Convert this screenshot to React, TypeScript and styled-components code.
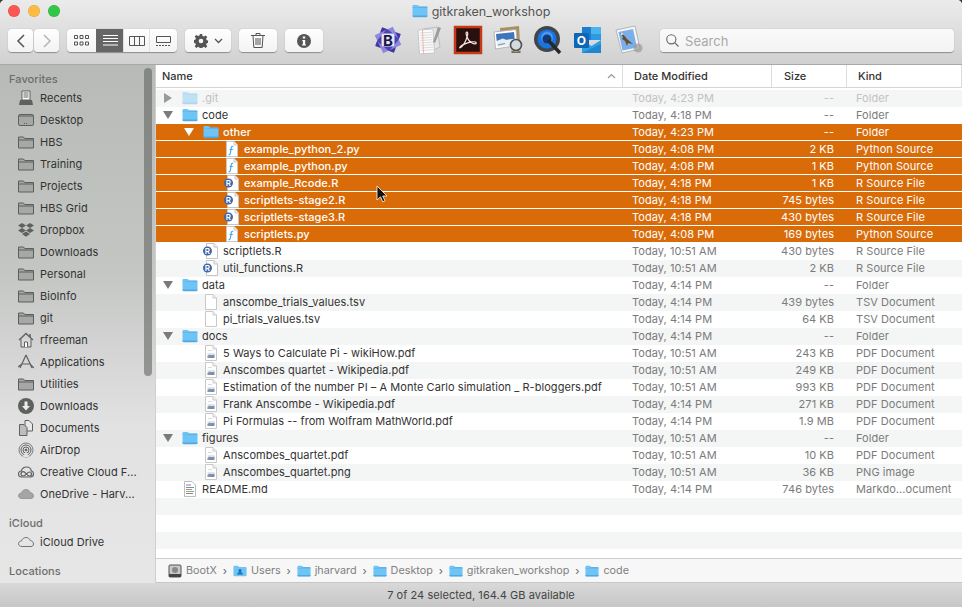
import React from "react";
import styled, { createGlobalStyle } from "styled-components";

const Global = createGlobalStyle`
  html, body { margin: 0; padding: 0; background: #3a3a3a; }
  #root { width: 962px; height: 607px; overflow: hidden; }
  * { box-sizing: border-box; }
`;

const Window = styled.div`
  width: 962px; height: 607px; display: flex; flex-direction: column;
  border-radius: 5px 5px 0 0; overflow: hidden; background: #fff;
  font-family: Inter, "Liberation Sans", sans-serif; font-size: 11px; letter-spacing: .05px; position: relative;
`;
const Chrome = styled.header`
  height: 65px; flex: none; display: flex; flex-direction: column;
  background: linear-gradient(#ebebeb, #d1d1d1); border-bottom: 1px solid #a8a8a8;
`;
const TitleBar = styled.div`
  height: 22px; flex: none; position: relative; display: flex; align-items: center; justify-content: center; gap: 4px;
  color: #555; font-size: 12.5px; letter-spacing: 0;
`;
const Lights = styled.div`
  position: absolute; left: 8px; top: 5px; display: flex; gap: 8px;
`;
const Light = styled.span<{ $c: string }>`
  width: 12px; height: 12px; border-radius: 50%; background: ${p => p.$c}; box-shadow: inset 0 0 0 .5px rgba(0,0,0,.12);
`;
const ToolRow = styled.div`
  display: flex; align-items: flex-start; padding: 7px 8px 0;
`;
const Btn = styled.div<{ $w: number; $ml?: number }>`
  width: ${p => p.$w}px; height: 23px; margin-left: ${p => p.$ml ?? 0}px; flex: none;
  display: flex; align-items: center; justify-content: center; gap: 6px;
  background: linear-gradient(#fefefe, #f3f3f3); border-radius: 4px; box-shadow: 0 .5px 1px rgba(0,0,0,.35);
`;
const Segmented = styled.div`
  margin-left: 8px; display: flex; height: 23px; flex: none; border-radius: 4px; overflow: hidden;
  background: linear-gradient(#fefefe, #f3f3f3); box-shadow: 0 .5px 1px rgba(0,0,0,.35);
`;
const Seg = styled.div<{ $w: number; $on?: boolean }>`
  width: ${p => p.$w}px; display: flex; align-items: center; justify-content: center;
  background: ${p => (p.$on ? "#666" : "transparent")}; color: ${p => (p.$on ? "#fff" : "#555")};
  border-left: 1px solid ${p => (p.$on ? "#666" : "#e2e2e2")};
  &:first-child { border-left: none; }
`;
const Apps = styled.div`
  margin-left: 50px; margin-top: -4px; display: flex; gap: 10px; flex: none;
`;
const Search = styled.div`
  margin-left: 17px; width: 294px; height: 23px; flex: none; display: flex; align-items: center; gap: 6px; padding-left: 6px;
  background: linear-gradient(#fafafa, #f3f3f3); border-radius: 4px; box-shadow: 0 .5px 1px rgba(0,0,0,.35);
  color: #a9a9a9; font-size: 13px;
`;
const Body = styled.div` flex: 1; min-height: 0; display: flex; `;
const Sidebar = styled.nav`
  width: 156px; flex: none; position: relative; overflow: hidden; padding-top: 6px;
  background: linear-gradient(#b7bab7 0%, #c4c6c4 40%, #e2e2e2 70%, #e6e6e6 100%);
  border-right: 1px solid #cfcfcf;
`;
const Thumb = styled.div`
  position: absolute; left: 144px; top: 3px; width: 8px; height: 308px; border-radius: 4px; background: rgba(90,92,90,.55);
`;
const GroupLabel = styled.div`
  height: 16px; line-height: 16px; padding-left: 9px; color: #6b6d6b; font-weight: 500;
  &:not(:first-of-type) { margin-top: 10px; }
`;
const SideItem = styled.div`
  height: 22px; display: flex; align-items: center; padding-left: 18px; gap: 6px; color: #333; white-space: nowrap;
`;
const Main = styled.main` flex: 1; min-width: 0; display: flex; flex-direction: column; background: #fff; `;
const HeaderRow = styled.div`
  height: 23px; flex: none; display: flex; color: #333; border-bottom: 1px solid #d5d5d5; margin-bottom: 2px; background: #fff;
`;
const HCell = styled.div<{ $w: number; $pl: number }>`
  width: ${p => p.$w}px; flex: none; height: 100%; display: flex; align-items: center; justify-content: space-between;
  padding-left: ${p => p.$pl}px; padding-right: 6px; border-right: 1px solid #dcdcdc; font-weight: 500; letter-spacing: 0;
`;
const Rows = styled.div` flex: 1; min-height: 0; overflow: hidden; `;
const Row = styled.div<{ $sel?: boolean; $odd?: boolean; $dim?: boolean }>`
  height: 17px; display: flex; align-items: center; white-space: nowrap;
  background: ${p => (p.$sel ? "#d96b09" : p.$odd ? "#f4f5f5" : "#fff")};
  border-bottom: ${p => (p.$sel ? "1px solid #fff" : "none")};
  padding-bottom: ${p => (p.$sel ? 0 : 1)}px;
  color: ${p => (p.$sel ? "#fff" : p.$dim ? "#c2c2c2" : "#7b7b7b")};
`;
const NameCell = styled.div<{ $depth: number; $sel?: boolean; $dim?: boolean }>`
  width: 466px; flex: none; display: flex; align-items: center; padding-left: ${p => 6 + p.$depth * 21}px;
  color: ${p => (p.$sel ? "#fff" : p.$dim ? "#c2c2c2" : "#333")}; font-weight: ${p => (p.$sel ? 500 : 400)};
`;
const Arrow = styled.span<{ $open: boolean; $sel?: boolean; $dim?: boolean; $none?: boolean }>`
  width: 20px; flex: none; display: flex; padding-left: 1px; visibility: ${p => (p.$none ? "hidden" : "visible")};
  &::before {
    content: ""; width: 0; height: 0; display: block;
    ${p => {
      const c = p.$sel ? "#fff" : p.$dim ? "#999" : "#7a7a7a";
      return p.$open
        ? `border-left: 5px solid transparent; border-right: 5px solid transparent; border-top: 8px solid ${c};`
        : `border-top: 5px solid transparent; border-bottom: 5px solid transparent; border-left: 8px solid ${c}; margin-left: 1px;`;
    }}
  }
`;
const IconSlot = styled.span<{ $dim?: boolean }>`
  width: 16px; height: 16px; flex: none; margin-right: 4px; display: flex; align-items: center; justify-content: center;
  opacity: ${p => (p.$dim ? 0.4 : 1)};
`;
const DateCell = styled.div` width: 149px; flex: none; padding-left: 10px; `;
const SizeCell = styled.div` width: 75px; flex: none; text-align: right; padding-right: 12px; `;
const KindCell = styled.div` flex: 1; padding-left: 10px; `;
const PathBar = styled.div`
  height: 25px; flex: none; display: flex; align-items: center; padding-left: 12px; color: #7f7f7f; background: #f7f7f7;
  border-top: 1px solid #cfcfcf; border-bottom: 1px solid #c6c6c6; font-size: 10.8px; letter-spacing: 0;
`;
const Crumb = styled.div` display: flex; align-items: center; gap: 4px; `;
const Sep = styled.span` width: 16px; text-align: center; color: #666; font-size: 11px; `;
const StatusBar = styled.footer`
  height: 24px; flex: none; display: flex; align-items: center; justify-content: center; color: #444;
  background: linear-gradient(#d9d9d9, #c6c6c6);
`;
const Cursor = styled.svg` position: absolute; left: 376px; top: 185px; `;

const Folder = ({ s = 16, tone = "blue" }: { s?: number; tone?: "blue" | "gray" }) =>
  tone === "blue" ? (
    <svg width={s} height={s} viewBox="0 0 16 16">
      <path d="M.5 3.2C.5 2.5 1 2 1.7 2h3.6c.5 0 .8.2 1.1.6l.7.9h7.2c.7 0 1.2.5 1.2 1.2v8.1c0 .7-.5 1.2-1.2 1.2H1.7c-.7 0-1.2-.5-1.2-1.2z" fill="#6fc4f6" />
      <path d="M.5 5h15v-.3c0-.7-.5-1.2-1.2-1.2H7L5.900 4.600 .5 4.600z" fill="#4ea9e3" opacity=".6" />
      <path d="M.5 12.6v.4c0 .7.5 1.2 1.2 1.2h12.6c.7 0 1.2-.5 1.2-1.2v-.4z" fill="#4fa8e0" />
    </svg>
  ) : (
    <svg width={16} height={16} viewBox="0 0 16 16">
      <path d="M.5 3h5l1.2 1.5h8.8v9.5H.5z" fill="#a6a8a6" stroke="#5c5e5c" />
      <path d="M.5 6h15" stroke="#5c5e5c" />
    </svg>
  );

const PageBase = ({ children }: { children?: React.ReactNode }) => (
  <svg width={16} height={16} viewBox="0 0 16 16">
    <path d="M2.500.5h7.500l3.500 3.500v11.500h-11z" fill="#fff" stroke="#c9c9c9" />
    <path d="M10 .5v3.500h3.500" fill="#f2f2f2" stroke="#c9c9c9" />
    {children}
  </svg>
);
const PyDoc = () => (
  <PageBase>
    <path d="M9.300 5.500c-1.200-.5-1.800 0-2 1.200l-1 5.800c-.2 1-.8 1.300-1.600 1M5.600 8.500h3.200" fill="none" stroke="#39a6e8" strokeWidth="1.100" />
  </PageBase>
);
const RDoc = () => (
  <svg width={16} height={16} viewBox="0 0 16 16">
    <path d="M3.500.5H11L14.500 4v11.500h-11z" fill="#fff" stroke="#c4c4c4" />
    <path d="M11 .5V4h3.500" fill="#f2f2f2" stroke="#c4c4c4" />
    <circle cx="4.500" cy="8" r="4.500" fill="#3f66a6" />
    <text x="4.500" y="11" textAnchor="middle" fontSize="8" fontWeight="600" fill="#fff" fontFamily="Inter">R</text>
  </svg>
);
const PdfDoc = () => (
  <PageBase>
    <rect x="4.500" y="8" width="7" height="5" fill="#dfe6f0" />
    <path d="M4.500 11l2-1.500 2 1 3-1V13h-7z" fill="#7f95b8" />
    <circle cx="9" cy="11.500" r="1.500" fill="#8a8a8a" />
    <path d="M5 5.500h4" stroke="#dcdcdc" />
  </PageBase>
);
const ReadmeDoc = () => (
  <svg width={14} height={16} viewBox="0 0 14 16">
    <path d="M1.500.5H9L12.500 4v11.500h-11z" fill="#fff" stroke="#bdbdbd" />
    <path d="M3 4h5" stroke="#888" />
    <path d="M3 6.500h8" stroke="#6b8fc9" />
    <path d="M3 8.500h6" stroke="#cf7a7a" />
    <path d="M3 10.500h8" stroke="#88b07a" />
    <path d="M3 12.500h7" stroke="#888" />
  </svg>
);

const g = "#5f615f";
const cloud = "M4 12.500C2 12.500.5 11.500.5 9.800S2 7 3.500 7C4.300 4.500 6 3.500 8 3.500s3.500 1 4.200 3C14.500 6.800 15.500 8.300 15.500 10s-1.200 2.500-2.500 2.500z";
const SideIcons: Record<string, React.ReactNode> = {
  recents: <svg width={16} height={16} viewBox="0 0 16 16"><path d="M4 1h8v9H4z" fill="#fff" stroke={g} /><path d="M5.500 3h5M5.500 5h5M5.500 7h5" stroke={g} /><path d="M2 10h12l1 5H1z" fill={g} /></svg>,
  desktop: <svg width={16} height={16} viewBox="0 0 16 16"><rect x=".5" y="2.500" width="15" height="11" rx="1.500" fill="#a6a8a6" stroke={g} /><path d="M1 4h14" stroke={g} /><path d="M6 11.500h4" stroke={g} strokeDasharray="1 1" /></svg>,
  folder: <Folder tone="gray" />,
  dropbox: <svg width={16} height={16} viewBox="0 0 16 16"><path fill={g} d="M4 1l4 2.500L4 6 0 3.500zM12 1l4 2.500L12 6 8 3.500zM4 6l4 2.500L4 11 0 8.500zM12 6l4 2.500L12 11 8 8.500zM8 9.500l4 2.500-4 2.800L4 12z" /></svg>,
  home: <svg width={16} height={16} viewBox="0 0 16 16"><path d="M1 8l7-6.500L15 8" fill="none" stroke={g} strokeWidth="1.300" /><path d="M3 7v8h10V7" fill="#d8d8d8" stroke={g} /><path d="M6.500 15v-5h3v5" fill="#fff" stroke={g} /><path d="M12 2v3" stroke={g} strokeWidth="1.500" /></svg>,
  apps: <svg width={16} height={16} viewBox="0 0 16 16"><path d="M8 1L2 14M8 1l6 13M4 10h9M0 13l4-3M16 14l-3-3" fill="none" stroke={g} strokeWidth="1.200" /></svg>,
  down: <svg width={16} height={16} viewBox="0 0 16 16"><circle cx="8" cy="8" r="8" fill={g} /><path d="M6.500 3.500h3V8H12l-4 4.500L4 8h2.500z" fill="#eee" /></svg>,
  docs: <svg width={16} height={16} viewBox="0 0 16 16"><path d="M7 .5h4l3.500 3.500v7H7z" fill="#e8e8e8" stroke={g} /><path d="M1.500 4.500H6l3 3v8H1.500z" fill="#bdbdbd" stroke={g} /></svg>,
  airdrop: <svg width={16} height={16} viewBox="0 0 16 16" fill="none" stroke={g}><circle cx="8" cy="8" r="7" opacity=".8" /><circle cx="8" cy="8" r="5" /><circle cx="8" cy="8" r="3" /><circle cx="8" cy="8" r="1" fill={g} /><path d="M5 15l3-6 3 6z" fill="#e2e2e2" stroke="none" /></svg>,
  cc: <svg width={16} height={16} viewBox="0 0 16 16" fill="none" stroke={g} strokeWidth="1.200"><path d="M3.500 13C1.500 13 .5 11.500.5 10S1.700 7 3.300 7C4 4.500 6 3 8.500 3s4.500 1.700 4.800 4c1.300.2 2.200 1.400 2.200 3s-1 3-3 3z" /><path d="M3 10c0-1.500 1-2.300 2.200-2.300 2.500 0 3.600 4.300 6.300 4.300 1.200 0 2-1 2-2s-.8-2-2-2C9 8 8 12 5 12c-1 0-2-.6-2-2z" /></svg>,
  onedrive: <svg width={16} height={16} viewBox="0 0 16 16"><path d={cloud} fill="#a4a6a4" stroke="#7a7c7a" strokeWidth=".6" /></svg>,
  icloud: <svg width={16} height={16} viewBox="0 0 16 16"><path d={cloud} fill="none" stroke="#666" strokeWidth=".9" /></svg>,
};

const favorites: [string, string][] = [
  ["recents", "Recents"], ["desktop", "Desktop"], ["folder", "HBS"], ["folder", "Training"], ["folder", "Projects"],
  ["folder", "HBS Grid"], ["dropbox", "Dropbox"], ["folder", "Downloads"], ["folder", "Personal"], ["folder", "BioInfo"],
  ["folder", "git"], ["home", "rfreeman"], ["apps", "Applications"], ["folder", "Utilities"], ["down", "Downloads"],
  ["docs", "Documents"], ["airdrop", "AirDrop"], ["cc", "Creative Cloud F..."], ["onedrive", "OneDrive - Harv..."],
];

type Kind = "folder" | "py" | "r" | "pdf" | "tsv" | "md";
type Item = { n: string; d: number; k: Kind; t: string; s: string; kind: string; open?: boolean; sel?: boolean; dim?: boolean };
const items: Item[] = [
  { n: ".git", d: 0, k: "folder", t: "Today, 4:23 PM", s: "--", kind: "Folder", open: false, dim: true },
  { n: "code", d: 0, k: "folder", t: "Today, 4:18 PM", s: "--", kind: "Folder", open: true },
  { n: "other", d: 1, k: "folder", t: "Today, 4:23 PM", s: "--", kind: "Folder", open: true, sel: true },
  { n: "example_python_2.py", d: 2, k: "py", t: "Today, 4:08 PM", s: "2 KB", kind: "Python Source", sel: true },
  { n: "example_python.py", d: 2, k: "py", t: "Today, 4:08 PM", s: "1 KB", kind: "Python Source", sel: true },
  { n: "example_Rcode.R", d: 2, k: "r", t: "Today, 4:18 PM", s: "1 KB", kind: "R Source File", sel: true },
  { n: "scriptlets-stage2.R", d: 2, k: "r", t: "Today, 4:18 PM", s: "745 bytes", kind: "R Source File", sel: true },
  { n: "scriptlets-stage3.R", d: 2, k: "r", t: "Today, 4:18 PM", s: "430 bytes", kind: "R Source File", sel: true },
  { n: "scriptlets.py", d: 2, k: "py", t: "Today, 4:08 PM", s: "169 bytes", kind: "Python Source", sel: true },
  { n: "scriptlets.R", d: 1, k: "r", t: "Today, 10:51 AM", s: "430 bytes", kind: "R Source File" },
  { n: "util_functions.R", d: 1, k: "r", t: "Today, 10:51 AM", s: "2 KB", kind: "R Source File" },
  { n: "data", d: 0, k: "folder", t: "Today, 4:14 PM", s: "--", kind: "Folder", open: true },
  { n: "anscombe_trials_values.tsv", d: 1, k: "tsv", t: "Today, 4:14 PM", s: "439 bytes", kind: "TSV Document" },
  { n: "pi_trials_values.tsv", d: 1, k: "tsv", t: "Today, 4:14 PM", s: "64 KB", kind: "TSV Document" },
  { n: "docs", d: 0, k: "folder", t: "Today, 4:14 PM", s: "--", kind: "Folder", open: true },
  { n: "5 Ways to Calculate Pi - wikiHow.pdf", d: 1, k: "pdf", t: "Today, 10:51 AM", s: "243 KB", kind: "PDF Document" },
  { n: "Anscombes quartet - Wikipedia.pdf", d: 1, k: "pdf", t: "Today, 10:51 AM", s: "249 KB", kind: "PDF Document" },
  { n: "Estimation of the number PI – A Monte Carlo simulation _ R-bloggers.pdf", d: 1, k: "pdf", t: "Today, 10:51 AM", s: "993 KB", kind: "PDF Document" },
  { n: "Frank Anscombe - Wikipedia.pdf", d: 1, k: "pdf", t: "Today, 4:14 PM", s: "271 KB", kind: "PDF Document" },
  { n: "Pi Formulas -- from Wolfram MathWorld.pdf", d: 1, k: "pdf", t: "Today, 4:14 PM", s: "1.9 MB", kind: "PDF Document" },
  { n: "figures", d: 0, k: "folder", t: "Today, 10:51 AM", s: "--", kind: "Folder", open: true },
  { n: "Anscombes_quartet.pdf", d: 1, k: "pdf", t: "Today, 10:51 AM", s: "10 KB", kind: "PDF Document" },
  { n: "Anscombes_quartet.png", d: 1, k: "pdf", t: "Today, 10:51 AM", s: "36 KB", kind: "PNG image" },
  { n: "README.md", d: 0, k: "md", t: "Today, 4:14 PM", s: "746 bytes", kind: "Markdo...ocument" },
];

const fileIcon = (k: Kind) =>
  k === "folder" ? <Folder /> : k === "py" ? <PyDoc /> : k === "r" ? <RDoc /> : k === "pdf" ? <PdfDoc /> : k === "md" ? <ReadmeDoc /> : <PageBase />;

const AppIcons = () => (
  <Apps>
    <svg width={30} height={30} viewBox="0 0 30 30">
      <rect x="5" y="5" width="20" height="20" fill="#3f37a0" transform="rotate(20 15 15)" />
      <rect x="5" y="5" width="20" height="20" fill="#8f88dc" transform="rotate(65 15 15)" />
      <rect x="7" y="7" width="16" height="16" rx="2" fill="#4d44b3" transform="rotate(40 15 15)" />
      <rect x="8.500" y="8.500" width="13" height="13" rx="2" fill="#e6e6f7" />
      <text x="15" y="20.500" textAnchor="middle" fontSize="15" fontWeight="700" fontFamily="Inter" fill="#1a1745">B</text>
    </svg>
    <svg width={30} height={30} viewBox="0 0 30 30">
      <path d="M10 4l14-2 3 20-13 6z" fill="#e4e4e4" stroke="#bdbdbd" />
      <path d="M5 5l15-1 1.500 24L6.500 29z" fill="#fbfbfb" stroke="#c9c9c9" />
      <path d="M7 8l12-.8M7 10.500l12.200-.8M7.200 13l12.200-.8M7.300 15.500l12.300-.8M7.500 18l12.300-.8M7.600 20.500l12.300-.8M7.800 23l12.300-.8M7.900 25.500l12.300-.8" stroke="#dcdcdc" />
      <path d="M9.500 5l1 24" stroke="#efb8b0" />
      <path d="M25 2l3 1-6 15-2-1z" fill="#9a9a9a" />
    </svg>
    <svg width={30} height={30} viewBox="0 0 30 30">
      <rect x="2" y="2" width="26" height="26" fill="#2b0f0e" stroke="#c8391a" strokeWidth="2.500" />
      <path d="M7 22.500c3-1.200 6-6.500 7.500-12 .5-2 .2-3.500-.6-3.500s-1.100 1.300-.4 3.500c1.400 4.300 3.700 6.700 6 7.800 2 .9 4 .6 3.700-.5-.4-1.200-4-1.200-7.700-.2-3.700 1-7.300 3-8.500 4.500-.5.600-.3 1 .5.400z" fill="none" stroke="#f2e6e2" strokeWidth="1.200" />
    </svg>
    <svg width={30} height={30} viewBox="0 0 30 30">
      <path d="M7 3l19-2 1 17-19 3z" fill="#a98f5e" />
      <path d="M1 7l22-2.500 1.500 16L2.500 24z" fill="#fff" stroke="#b5b5b5" />
      <path d="M3 9l18-2 .7 7L3.700 16z" fill="#3f75bb" />
      <path d="M3.700 16l6-2.500 4 1.500 8-1 .6 6-18 2z" fill="#e8eef5" />
      <path d="M5 20l7-1.500" stroke="#7a8a9a" />
      <circle cx="23" cy="20" r="5.500" fill="#d3dadf" stroke="#4f4f4f" strokeWidth="1.600" />
      <path d="M18.500 25.500c2 1.500 7 1.500 9 0v2.500h-9z" fill="#7a6a4c" />
    </svg>
    <svg width={30} height={30} viewBox="0 0 30 30">
      <circle cx="14" cy="14" r="13" fill="#41464c" />
      <circle cx="14" cy="14" r="9.500" fill="#1a74e0" />
      <circle cx="14" cy="12.500" r="6" fill="#5ba7f5" opacity=".7" />
      <circle cx="14" cy="14" r="4.500" fill="#123a78" />
      <path d="M15 15l12 13" stroke="#25282c" strokeWidth="3.500" />
    </svg>
    <svg width={30} height={30} viewBox="0 0 30 30">
      <path d="M9 2h19v13H9z" fill="#1a7fce" />
      <path d="M18 2h10v7H18z" fill="#4db3ee" />
      <path d="M18 9h10v6H18z" fill="#2a9be3" />
      <path d="M9 15l9.500 6 9.500-6v13H9z" fill="#2b9fe7" />
      <path d="M9 28l19-9v9z" fill="#1f86d0" />
      <rect x="1" y="8" width="15" height="15" rx="1" fill="#0f66b5" />
      <text x="8.500" y="20" textAnchor="middle" fontSize="12" fontWeight="700" fontFamily="Inter" fill="#fff">O</text>
    </svg>
    <svg width={30} height={30} viewBox="0 0 30 30">
      <path d="M3 5l19-4 5 23-18 4z" fill="#f6f6f6" stroke="#b5b5b5" />
      <path d="M5.500 7l14.500-3 4 18.500-14.500 3z" fill="#79b0ea" />
      <path d="M7 8c3 1 5 3 7 6l6 5-5-1-1 3-2-5-3-2 1-2z" fill="#6b4d2b" />
      <path d="M8 7.500c1 .5 2 1 2.500 2L8 10z" fill="#f0e6d0" />
      <circle cx="25" cy="23" r="4.500" fill="#9a9a9a" opacity=".7" />
    </svg>
  </Apps>
);

export default function App() {
  const blanks = Array.from({ length: 4 }, (_, i) => items.length + i);
  return (
    <Window>
      <Global />
      <Chrome>
        <TitleBar>
          <Lights>
            <Light $c="#fc5753" /><Light $c="#fdbc40" /><Light $c="#33c748" />
          </Lights>
          <Folder />
          <span>gitkraken_workshop</span>
        </TitleBar>
        <ToolRow>
          <Btn $w={25}>
            <svg width={10} height={14} viewBox="0 0 10 14"><path d="M8 1L2 7l6 6" fill="none" stroke="#555" strokeWidth="1.500" /></svg>
          </Btn>
          <Btn $w={25} $ml={1}>
            <svg width={10} height={14} viewBox="0 0 10 14"><path d="M2 1l6 6-6 6" fill="none" stroke="#b5b5b5" strokeWidth="1.500" /></svg>
          </Btn>
          <Segmented>
            <Seg $w={29}>
              <svg width={15} height={11} viewBox="0 0 15 11" fill="none" stroke="currentColor"><path d="M.5.5h3v3h-3zM6 .5h3v3H6zM11.500.5h3v3h-3zM.5 7h3v3h-3zM6 7h3v3H6zM11.500 7h3v3h-3z" /></svg>
            </Seg>
            <Seg $w={27} $on>
              <svg width={15} height={11} viewBox="0 0 15 11" stroke="currentColor"><path d="M0 .5h15M0 3.500h15M0 6.500h15M0 10h15" /></svg>
            </Seg>
            <Seg $w={26}>
              <svg width={16} height={10} viewBox="0 0 16 10" fill="none" stroke="currentColor"><path d="M.5.5h15v9H.5zM5.500.5v9M10.500.5v9" /></svg>
            </Seg>
            <Seg $w={28}>
              <svg width={15} height={10} viewBox="0 0 15 10" fill="none" stroke="currentColor"><path d="M.5.5h14v6H.5z" /><path d="M0 9.500h15" strokeDasharray="2 1" /></svg>
            </Seg>
          </Segmented>
          <Btn $w={46} $ml={8}>
            <svg width={14} height={14} viewBox="0 0 14 14"><path fill="#555" fillRule="evenodd" d="M5.800 0h2.400l.3 2 1.400.6 1.700-1.200 1.700 1.700-1.200 1.700.6 1.400 1.900.3v2.400l-1.900.3-.6 1.400 1.200 1.700-1.700 1.700-1.700-1.200-1.400.6-.3 1.900H5.800l-.3-1.900-1.400-.6-1.700 1.200-1.700-1.700 1.200-1.700-.6-1.400-1.900-.3V6l1.900-.3.6-1.400L.7 2.600 2.400.9l1.700 1.200 1.400-.6zM7 4.700a2.300 2.300 0 100 4.600 2.300 2.300 0 000-4.600z" /></svg>
            <svg width={9} height={6} viewBox="0 0 9 6"><path d="M1 1l3.500 3.500L8 1" fill="none" stroke="#555" strokeWidth="1.300" /></svg>
          </Btn>
          <Btn $w={38} $ml={8}>
            <svg width={14} height={15} viewBox="0 0 14 15" fill="none" stroke="#555"><path d="M0 2.500h14M5 2.500V.5h4v2M2 2.500l.8 12h8.400l.8-12M5 5v7M7 5v7M9 5v7" /></svg>
          </Btn>
          <Btn $w={38} $ml={8}>
            <svg width={14} height={14} viewBox="0 0 14 14"><circle cx="7" cy="7" r="7" fill="#555" /><path d="M5.800 2.500h2.400v2H5.800zM5.300 6h2.900v4.500h.8v1H5v-1h.9V7h-.6z" fill="#fff" /></svg>
          </Btn>
          <AppIcons />
          <Search>
            <svg width={13} height={13} viewBox="0 0 13 13" fill="none" stroke="#666" strokeWidth="1.100"><circle cx="5.300" cy="5.300" r="4.600" /><path d="M8.700 8.700L12.500 12.500" /></svg>
            Search
          </Search>
        </ToolRow>
      </Chrome>
      <Body>
        <Sidebar>
          <GroupLabel>Favorites</GroupLabel>
          {favorites.map(([i, l], x) => (
            <SideItem key={x}>{SideIcons[i]}<span>{l}</span></SideItem>
          ))}
          <GroupLabel>iCloud</GroupLabel>
          <SideItem>{SideIcons.icloud}<span>iCloud Drive</span></SideItem>
          <GroupLabel>Locations</GroupLabel>
          <Thumb />
        </Sidebar>
        <Main>
          <HeaderRow>
            <HCell $w={467} $pl={6}>
              <span>Name</span>
              <svg width={9} height={6} viewBox="0 0 9 6"><path d="M1 5l3.500-3.500L8 5" fill="none" stroke="#999" strokeWidth="1.200" /></svg>
            </HCell>
            <HCell $w={149} $pl={11}>Date Modified</HCell>
            <HCell $w={75} $pl={12}>Size</HCell>
            <HCell $w={115} $pl={11}>Kind</HCell>
          </HeaderRow>
          <Rows>
            {items.map((r, i) => (
              <Row key={r.n} $sel={r.sel} $odd={i % 2 === 0} $dim={r.dim}>
                <NameCell $depth={r.d} $sel={r.sel} $dim={r.dim}>
                  <Arrow $none={r.open === undefined} $open={!!r.open} $sel={r.sel} $dim={r.dim} />
                  <IconSlot $dim={r.dim}>{fileIcon(r.k)}</IconSlot>
                  <span>{r.n}</span>
                </NameCell>
                <DateCell>{r.t}</DateCell>
                <SizeCell>{r.s}</SizeCell>
                <KindCell>{r.kind}</KindCell>
              </Row>
            ))}
            {blanks.map(i => <Row key={i} $odd={i % 2 === 0} />)}
          </Rows>
          <PathBar>
            <Crumb>
              <svg width={14} height={14} viewBox="0 0 14 14"><rect x="1" y="1" width="12" height="12" rx="1" fill="#c8c8c8" stroke="#555" /><circle cx="7" cy="6" r="3" fill="#888" /><rect x="1" y="10" width="12" height="3" fill="#444" /></svg>
              BootX
            </Crumb>
            <Sep>›</Sep>
            <Crumb>
              <svg width={14} height={14} viewBox="0 0 16 16"><path d="M.5 3.200C.5 2.500 1 2 1.700 2h3.600l1.800 1.500h7.200c.7 0 1.200.5 1.200 1.200v8.100c0 .7-.5 1.200-1.200 1.200H1.700C1 14 .5 13.500.5 12.800z" fill="#6fc4f6" /><circle cx="8" cy="7.500" r="1.800" fill="#1f6fb5" /><path d="M4.800 12c0-2 1.500-2.800 3.200-2.800S11.200 10 11.200 12z" fill="#1f6fb5" /></svg>
              Users
            </Crumb>
            <Sep>›</Sep>
            <Crumb><Folder s={14} />jharvard</Crumb>
            <Sep>›</Sep>
            <Crumb><Folder s={14} />Desktop</Crumb>
            <Sep>›</Sep>
            <Crumb><Folder s={14} />gitkraken_workshop</Crumb>
            <Sep>›</Sep>
            <Crumb><Folder s={14} />code</Crumb>
          </PathBar>
        </Main>
      </Body>
      <StatusBar>7 of 24 selected, 164.4 GB available</StatusBar>
      <Cursor width={12} height={18} viewBox="0 0 12 18">
        <path d="M1 1v14l3.500-3.200 2.300 5 2.200-1-2.300-4.800H11z" fill="#111" stroke="#fff" strokeWidth=".8" />
      </Cursor>
    </Window>
  );
}
